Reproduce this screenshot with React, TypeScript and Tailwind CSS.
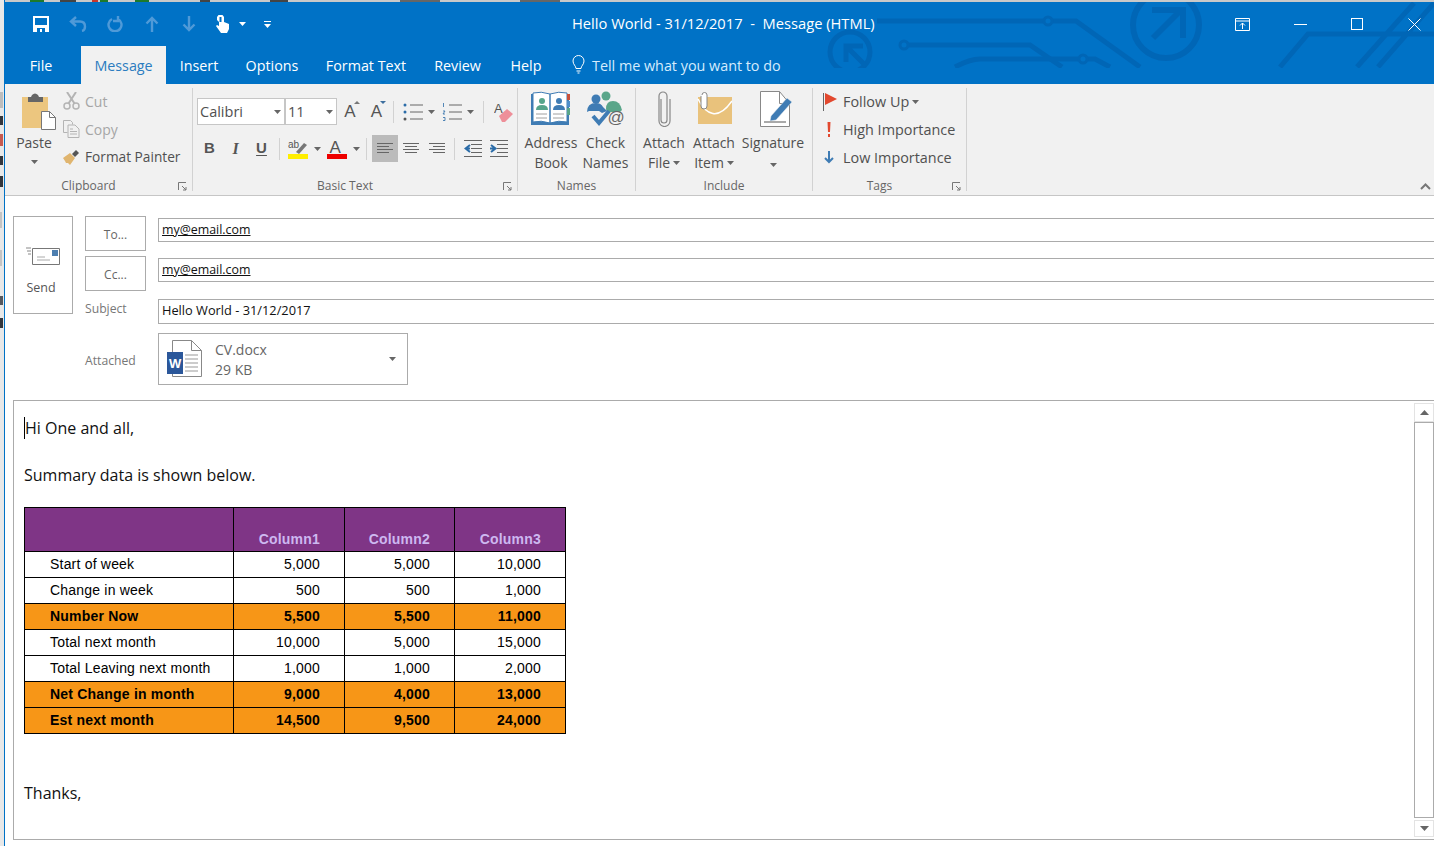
import type { ReactNode } from "react";

const ui = "font-['Open_Sans','Noto_Sans',sans-serif]";

function Caret({ className = "" }: { className?: string }) {
  return (
    <svg width="7" height="4" viewBox="0 0 7 4" className={className}>
      <path d="M0 0h7L3.5 4z" fill="#666" />
    </svg>
  );
}

function Launcher() {
  return (
    <svg width="9" height="9" viewBox="0 0 9 9" fill="none" stroke="#777" className="absolute right-[5px] bottom-[4px]">
      <path d="M.5 8V.5H8M4 4l4 4M5 8h3V5" />
    </svg>
  );
}

function Separator() {
  return <div className="w-px my-[4px] bg-[#d2d2d2]" />;
}

function Group({ width, label, launcher, children }: { width: number; label: string; launcher?: boolean; children: ReactNode }) {
  return (
    <div className="relative flex flex-col shrink-0" style={{ width }}>
      <div className="h-[93px] pt-[3px]">{children}</div>
      <div className={`text-center text-[12px] leading-[18px] text-[#666] ${launcher ? "pr-[20px]" : ""}`}>{label}</div>
      {launcher && <Launcher />}
    </div>
  );
}

function SmallRow({ icon, text, muted, caret, size = "text-[14px]" }: { icon: ReactNode; text: string; muted?: boolean; caret?: boolean; size?: string }) {
  return (
    <div className={`h-[28px] flex items-center ${size} ${muted ? "text-[#a6a6a6]" : "text-[#505050]"}`}>
      {icon}
      <span>{text}</span>
      {caret && <Caret className="ml-[3px]" />}
    </div>
  );
}

function BigButton({ width, icon, lines, caret, iconShift = "" }: { width: number; icon: ReactNode; lines: string[]; caret?: boolean; iconShift?: string }) {
  return (
    <div className="flex flex-col items-center text-[14px] leading-[20px] text-[#505050] shrink-0" style={{ width }}>
      <div className={`h-[46px] pt-[4px] flex justify-center ${iconShift}`}>{icon}</div>
      <div className="whitespace-nowrap">{lines[0]}</div>
      <div className="flex items-center h-[20px] whitespace-nowrap">
        {lines[1]}
        {caret && <Caret className={lines[1] ? "ml-[3px]" : "mt-[3px]"} />}
      </div>
    </div>
  );
}

function CircuitArt() {
  return (
    <svg width="1429" height="66" viewBox="5 2 1429 66" fill="none" stroke="#0066b6" strokeWidth="5" className="absolute left-0 top-0 pointer-events-none">
      <path d="M877 21h199l64 46M905 45h125l32 22" />
      <circle cx="1048" cy="21" r="4" fill="#0072c6" strokeWidth="3" />
      <circle cx="904" cy="45" r="4" fill="#0072c6" strokeWidth="3" />
      <path d="M955 67q15-8 25-8h115l15 8" />
      <circle cx="1083" cy="59" r="4" fill="#0072c6" strokeWidth="3" />
      <circle cx="1166" cy="25" r="33" strokeWidth="6" />
      <path d="M1153 38l27-27M1152 10h31v28" strokeWidth="6" />
      <circle cx="850" cy="52" r="20" strokeWidth="5" />
      <path d="M866 66l-18-18M846 62V46h17" strokeWidth="5" />
      <path d="M1280 67l28-33h126M1357 67l57-64M1378 67l56-64" />
    </svg>
  );
}

function TitleBar() {
  const fade = "#4f9ad8";
  return (
    <div className="relative z-10 h-[44px] flex items-center text-white">
      <div className="w-[567px] h-full flex items-center pl-[28px] shrink-0">
        <svg width="16" height="16" viewBox="0 0 16 16">
          <path d="M0 0h16v16H0z" fill="#fff" />
          <path d="M2 2h12v7H2z" fill="#0072c6" />
          <path d="M4 12h8v4H4z" fill="#0072c6" />
          <path d="M7 13h2v3H7z" fill="#fff" />
        </svg>
        <svg width="18" height="16" viewBox="0 0 18 16" fill="none" stroke={fade} strokeWidth="2.4" className="ml-[20px]">
          <path d="M7 1L2 5.500 7 10M2 5.500h9c4 0 5 3 5 5s-1 4-3 4.500" />
        </svg>
        <svg width="16" height="16" viewBox="0 0 16 16" fill="none" stroke={fade} strokeWidth="2.4" className="ml-[20px]">
          <path d="M5 3a6.500 6.500 0 1 0 6 0M11 0v5H6" />
        </svg>
        <svg width="14" height="16" viewBox="0 0 14 16" fill="none" stroke={fade} strokeWidth="2.4" className="ml-[22px]">
          <path d="M7 16V2M1.500 7.500L7 2l5.500 5.500" />
        </svg>
        <svg width="14" height="16" viewBox="0 0 14 16" fill="none" stroke={fade} strokeWidth="2.4" className="ml-[23px]">
          <path d="M7 0v14M1.500 8.500L7 14l5.500-5.500" />
        </svg>
        <svg width="15" height="18" viewBox="0 0 15 18" className="ml-[19px]">
          <path d="M3.500 0h4l1.500 2v5l5 2v5l-2 4H6l-5-7 1-1 2 1V7L2 5V2z" fill="#fff" />
          <path d="M4.500 2h2v5h-2z" fill="#0072c6" />
        </svg>
        <Caret className="ml-[9px] [&>path]:fill-white" />
        <div className="ml-[18px] flex flex-col items-center gap-[2px]">
          <div className="w-[7px] h-px bg-white" />
          <Caret className="[&>path]:fill-white" />
        </div>
      </div>
      <div className="whitespace-pre pb-[2px] text-[14.700px] flex-1">Hello World - 31/12/2017  -  Message (HTML)</div>
      <div className="flex items-center h-full shrink-0">
        <svg width="15" height="13" viewBox="0 0 15 13" fill="none" stroke="#fff" className="mr-[44px]">
          <path d="M.5.500h14v12H.5zM.5 3h14M7.500 11V5M5 7.500L7.500 5 10 7.500" />
        </svg>
        <div className="w-[13px] h-px bg-white mr-[44px]" />
        <div className="w-[12px] h-[12px] border border-white mr-[45px]" />
        <svg width="13" height="13" viewBox="0 0 13 13" stroke="#fff" className="mr-[13px]">
          <path d="M.5.500l12 12M12.500.500l-12 12" />
        </svg>
      </div>
    </div>
  );
}

function Tab({ width, label, active, extra = "" }: { width: number; label: string; active?: boolean; extra?: string }) {
  return (
    <div
      className={`h-full flex items-center justify-center pt-px text-[14.300px] shrink-0 ${extra} ${active ? "bg-[#f1f1f1] text-[#2b7cc0]" : "text-white"}`}
      style={{ width }}
    >
      {label}
    </div>
  );
}

function TabBar() {
  return (
    <div className="relative z-10 h-[38px] flex items-stretch">
      <Tab width={76} label="File" extra="pr-[4px]" />
      <Tab width={85} label="Message" active />
      <Tab width={66} label="Insert" />
      <Tab width={80} label="Options" />
      <Tab width={108} label="Format Text" />
      <Tab width={75} label="Review" />
      <Tab width={62} label="Help" />
      <div className="flex items-center pl-[15px] pt-px text-[14.350px] text-[#d5ecfd]">
        <svg width="13" height="19" viewBox="0 0 13 19" fill="none" stroke="#fff" className="mr-[7px] -mt-[3px]">
          <path d="M4 13.500C4 11 1 9.500 1 6a5.500 5.500 0 0 1 11 0c0 3.500-3 5-3 7.500zM4.500 16h4M5.500 18h2" />
        </svg>
        Tell me what you want to do
      </div>
    </div>
  );
}

function PasteIcon() {
  return (
    <svg width="35" height="39" viewBox="0 0 35 39">
      <path d="M1 5h26v31H1z" fill="#ecc67f" />
      <path d="M7 5h3l1-2q3-3 6 0l1 2h4v5H7z" fill="#666" />
      <path d="M20.500 19.500h8l6 6v12h-14z" fill="#fff" stroke="#777" />
      <path d="M28.500 19.500v6h6" fill="none" stroke="#777" />
    </svg>
  );
}

function ClipboardGroup() {
  return (
    <div className="flex">
      <div className="w-[58px] flex flex-col items-center text-[14px] leading-[20px] text-[#505050]">
        <div className="h-[46px] pt-[5px] pl-[9px]"><PasteIcon /></div>
        <div>Paste</div>
        <Caret className="mt-[7px]" />
      </div>
      <div className="flex flex-col">
        <SmallRow
          muted
          text="Cut"
          icon={
            <svg width="17" height="18" viewBox="0 0 17 18" fill="none" stroke="#b4b4b4" strokeWidth="1.500" className="mr-[5px]">
              <circle cx="4" cy="14" r="3" />
              <circle cx="13" cy="14" r="3" />
              <path d="M5.500 11.500L13 0M11.500 11.500L4 0" strokeWidth="2" />
            </svg>
          }
        />
        <SmallRow
          muted
          text="Copy"
          icon={
            <svg width="17" height="18" viewBox="0 0 17 18" fill="none" stroke="#b4b4b4" className="mr-[5px]">
              <path d="M.500.500h7l2 2v2M.500.500v12h4M5 5h7l4 4v8.500H5zM7 9h3M7 11.500h7M7 14h7" />
            </svg>
          }
        />
        <SmallRow
          text="Format Painter"
          size="text-[13.700px]"
          icon={
            <svg width="17" height="16" viewBox="0 0 17 16" className="mr-[5px]">
              <path d="M0 9l7-5 5 5-5 7-2-2-2 0-1-2z" fill="#e0b56f" />
              <path d="M9 5l4-4 3 3-4 4z" fill="#555" />
            </svg>
          }
        />
      </div>
    </div>
  );
}

function Glyph({ width, children, active }: { width: number; children: ReactNode; active?: boolean }) {
  return (
    <div className={`h-[27px] flex items-center justify-center shrink-0 ${active ? "bg-[#bbbbbb]" : ""}`} style={{ width }}>
      {children}
    </div>
  );
}

function VRule() {
  return <div className="w-px h-[22px] bg-[#d2d2d2] shrink-0" />;
}

function Lines({ kind }: { kind: "left" | "center" | "right" }) {
  const d = {
    left: "M0 .5h16M0 3.500h12M0 6.500h16M0 9.500h12",
    center: "M0 .5h16M2 3.500h12M0 6.500h16M2 9.500h12",
    right: "M0 .5h16M4 3.500h12M0 6.500h16M4 9.500h12",
  }[kind];
  return (
    <svg width="16" height="11" viewBox="0 0 16 11" fill="none" stroke="#666">
      <path d={d} />
    </svg>
  );
}

function ComboBox({ width, text }: { width: number; text: string }) {
  return (
    <div className="h-[27px] bg-white border border-[#c6c6c6] flex items-center justify-between pl-[2px] pr-[3px] text-[14.500px] text-[#505050] shrink-0" style={{ width }}>
      {text}
      <Caret />
    </div>
  );
}

function ListIcon({ numbered }: { numbered?: boolean }) {
  return (
    <svg width="20" height="18" viewBox="0 0 20 18">
      <path d="M7 2h13M7 9h13M7 16h13" stroke="#666" />
      {numbered ? (
        <path d="M1.500 0v4M1 8h2l-2 3h2M1 14.500h2v3H1" stroke="#2b6ca8" fill="none" strokeWidth=".8" />
      ) : (
        <g fill="#2b6ca8">
          <circle cx="2" cy="2" r="1.500" />
          <circle cx="2" cy="9" r="1.500" />
          <circle cx="2" cy="16" r="1.500" fill="#555" />
        </g>
      )}
    </svg>
  );
}

function BasicTextGroup() {
  return (
    <div className="pl-[4px] pt-[11px] flex flex-col gap-[10px]">
      <div className="flex items-center">
        <ComboBox width={88} text="Calibri" />
        <ComboBox width={52} text="11" />
        <Glyph width={26}>
          <span className="relative text-[17px] text-[#555] font-['Liberation_Sans',sans-serif]">
            A
            <svg width="6" height="3" viewBox="0 0 6 3" className="absolute -right-[4px] top-[2px]"><path d="M3 0l3 3H0z" fill="#777" /></svg>
          </span>
        </Glyph>
        <Glyph width={27}>
          <span className="relative text-[17px] text-[#555] font-['Liberation_Sans',sans-serif]">
            A
            <svg width="6" height="3" viewBox="0 0 6 3" className="absolute -right-[4px] top-[2px]"><path d="M3 3L6 0H0z" fill="#3d6f9e" /></svg>
          </span>
        </Glyph>
        <div className="w-[3px]" />
        <VRule />
        <div className="w-[9px]" />
        <ListIcon />
        <Caret className="ml-[5px]" />
        <div className="w-[7px]" />
        <ListIcon numbered />
        <Caret className="ml-[5px]" />
        <div className="w-[9px]" />
        <VRule />
        <div className="w-[10px]" />
        <svg width="20" height="20" viewBox="0 0 20 20">
          <text x="0" y="11" fontSize="13" fill="#555" fontFamily="Liberation Sans">A</text>
          <path d="M5 14l8-7 6 5-8 8H8z" fill="#ee8f99" />
        </svg>
      </div>
      <div className="flex items-center">
        <Glyph width={25}><span className="font-['Liberation_Sans',sans-serif] font-bold text-[15px] text-[#555]">B</span></Glyph>
        <Glyph width={27}><span className="font-['Liberation_Serif',serif] italic font-bold text-[16px] text-[#555]">I</span></Glyph>
        <Glyph width={25}><span className="font-['Liberation_Sans',sans-serif] font-bold text-[15px] text-[#555] underline underline-offset-2">U</span></Glyph>
        <div className="w-[5px]" />
        <VRule />
        <div className="w-[8px]" />
        <svg width="20" height="20" viewBox="0 0 20 20">
          <text x="0" y="9" fontSize="10" fill="#555" fontFamily="Liberation Sans">ab</text>
          <path d="M8 13l8-9 3 2-8 9z" fill="#777" />
          <path d="M0 15h20v5H0z" fill="#ffee00" />
        </svg>
        <Caret className="ml-[6px]" />
        <div className="w-[6px]" />
        <svg width="20" height="20" viewBox="0 0 20 20">
          <text x="2.500" y="14" fontSize="17" fill="#555" fontFamily="Liberation Sans">A</text>
          <path d="M0 15h20v5H0z" fill="#ee0000" />
        </svg>
        <Caret className="ml-[6px]" />
        <div className="w-[6px]" />
        <VRule />
        <div className="w-[5px]" />
        <Glyph width={26} active><Lines kind="left" /></Glyph>
        <Glyph width={26}><Lines kind="center" /></Glyph>
        <Glyph width={26}><Lines kind="right" /></Glyph>
        <div className="w-[4px]" />
        <VRule />
        <div className="w-[9px]" />
        <svg width="18" height="17" viewBox="0 0 18 17" fill="none">
          <path d="M0 .5h18M7 4.500h11M7 8.500h11M7 12.500h11M0 16.500h18" stroke="#666" />
          <path d="M6 5L1.500 8.500 6 12M2 8.500h4" stroke="#2b6ca8" strokeWidth="2" />
        </svg>
        <div className="w-[8px]" />
        <svg width="18" height="17" viewBox="0 0 18 17" fill="none">
          <path d="M0 .5h18M7 4.500h11M7 8.500h11M7 12.500h11M0 16.500h18" stroke="#666" />
          <path d="M1 5l4.500 3.500L1 12M5 8.500H0" stroke="#2b6ca8" strokeWidth="2" />
        </svg>
      </div>
    </div>
  );
}

function AddressBookIcon() {
  return (
    <svg width="40" height="36" viewBox="0 0 40 36">
      <path d="M0 3h38v31H0z" fill="#3f7cb4" />
      <path d="M2 2q8-2 17 1v29q-9-3-17-1zM36 2q-8-2-17 1v29q9-3 17-1z" fill="#fff" stroke="#3f7cb4" />
      <path d="M36 3h3v6h-3z" fill="#c9503a" />
      <path d="M36 10h3v6h-3z" fill="#4d8ec9" />
      <path d="M36 17h3v7h-3z" fill="#5aa68a" />
      <circle cx="11" cy="10" r="3" fill="#57a58b" />
      <path d="M5 19q0-5 6-5t6 5z" fill="#57a58b" />
      <circle cx="28" cy="10" r="3" fill="#3f7cb4" />
      <path d="M22 19q0-5 6-5t6 5z" fill="#3f7cb4" />
      <path d="M5 23h11M5 27h11M22 23h11M22 27h11" stroke="#888" strokeWidth=".8" />
    </svg>
  );
}

function CheckNamesIcon() {
  return (
    <svg width="38" height="37" viewBox="0 0 38 37">
      <circle cx="19" cy="5" r="4.500" fill="#5aa68a" />
      <path d="M19 18q0-8 7-8t9 9l-2 2H20z" fill="#5aa68a" />
      <circle cx="9" cy="8" r="4.500" fill="#3f7cb4" />
      <path d="M0 21q0-9 9-9 5 0 7 4l4 4-5 2-3-2H2z" fill="#3f7cb4" />
      <path d="M6 25l6 7L22 20" fill="none" stroke="#3f7cb4" strokeWidth="4" />
      <text x="20.500" y="32" fontSize="17" fill="#666" fontFamily="Liberation Sans">@</text>
    </svg>
  );
}

function NamesGroup() {
  return (
    <div className="flex pl-[6px]">
      <BigButton width={54} icon={<AddressBookIcon />} lines={["Address", "Book"]} />
      <BigButton width={55} icon={<CheckNamesIcon />} lines={["Check", "Names"]} />
    </div>
  );
}

function IncludeGroup() {
  return (
    <div className="flex pl-[4px]">
      <BigButton
        width={48}
        lines={["Attach", "File"]}
        caret
        icon={
          <svg width="14" height="36" viewBox="0 0 14 36" fill="none" stroke="#888" strokeWidth="1.200">
            <path d="M4 8v21a3 3 0 0 0 6 0V5a4 4 0 0 0-8 0v25a5.500 5.500 0 0 0 11 0V8" />
          </svg>
        }
      />
      <BigButton
        width={52}
        lines={["Attach", "Item"]}
        caret
        icon={
          <svg width="36" height="34" viewBox="0 0 36 34">
            <path d="M2 6h34v27H2z" fill="#e9c27c" />
            <path d="M2 8c8 16 20 22 34 2" fill="none" stroke="#fff" strokeWidth="1.500" />
            <path d="M5 4v10a3 3 0 0 0 6 0V3a2.500 2.500 0 0 0-5 0" transform="translate(0 1)" fill="#fff" stroke="#888" />
          </svg>
        }
      />
      <BigButton
        width={66}
        lines={["Signature", ""]}
        caret
        iconShift="ml-[6px]"
        icon={
          <svg width="34" height="36" viewBox="0 0 34 36" fill="none">
            <path d="M1.500.5h19l10 12v23h-29z" fill="#fff" stroke="#888" />
            <path d="M20.500.5v12h10" stroke="#888" />
            <path d="M11 30l1-5 16-18 5 4-16 18z" fill="#3f7cb4" stroke="#f1f1f1" strokeWidth=".5" />
            <path d="M5 31h22" stroke="#555" />
          </svg>
        }
      />
    </div>
  );
}

function TagsGroup() {
  return (
    <div className="flex flex-col pl-[10px] pt-px">
      <SmallRow
        caret
        text="Follow Up"
        size="text-[14.400px]"
        icon={
          <svg width="20" height="18" viewBox="0 0 20 18">
            <path d="M.5 0v18" stroke="#666" />
            <path d="M2 0l12 6-12 6z" fill="#e2492f" />
          </svg>
        }
      />
      <SmallRow
        text="High Importance"
        size="text-[14.400px]"
        icon={
          <svg width="20" height="16" viewBox="0 0 20 16">
            <path d="M4.500 0h3l-.5 10H5zM5 12h2v3H5z" fill="#e2492f" />
          </svg>
        }
      />
      <SmallRow
        text="Low Importance"
        size="text-[14.400px]"
        icon={
          <svg width="20" height="14" viewBox="0 0 20 14" fill="none" stroke="#3f7cb4" strokeWidth="2">
            <path d="M6 0v11M2 7l4 4 4-4" />
          </svg>
        }
      />
    </div>
  );
}

function Ribbon() {
  return (
    <div className="relative h-[112px] bg-[#f1f1f1] border-b border-[#c6c6c6] flex text-[#505050] shrink-0">
      <Group width={187} label="Clipboard" launcher><ClipboardGroup /></Group>
      <Separator />
      <Group width={324} label="Basic Text" launcher><BasicTextGroup /></Group>
      <Separator />
      <Group width={117} label="Names"><NamesGroup /></Group>
      <Separator />
      <Group width={176} label="Include"><IncludeGroup /></Group>
      <Separator />
      <Group width={153} label="Tags" launcher><TagsGroup /></Group>
      <Separator />
      <svg width="11" height="7" viewBox="0 0 11 7" fill="none" stroke="#777" strokeWidth="2" className="absolute right-[3px] bottom-[5px]">
        <path d="M1 6l4.500-4.500L10 6" />
      </svg>
    </div>
  );
}

function AddressField({ label, value }: { label: string; value: string }) {
  return (
    <div className="flex items-start h-[40px]">
      <button className="w-[61px] h-[35px] pt-[2px] border border-[#ababab] bg-white text-[12px] text-[#666] shrink-0">{label}</button>
      <div className="ml-[12px] mt-[2px] flex-1 h-[24px] border border-[#ababab] border-r-0 flex items-center pl-[3px] text-[12.400px] text-[#111]">
        <span className="underline">{value}</span>
      </div>
    </div>
  );
}

function WordIcon() {
  return (
    <svg width="35" height="38" viewBox="0 0 35 38">
      <path d="M5.500.500h19l10 10v26h-29z" fill="#fff" stroke="#888" />
      <path d="M24.500.500v10h10" fill="none" stroke="#888" />
      <path d="M18 15h13M18 19h13M18 23h13M18 27h13M18 31h13" stroke="#999" />
      <path d="M0 12h16v22H0z" fill="#2b579a" />
      <text x="2" y="28" fontSize="13" fontWeight="700" fill="#fff" fontFamily="Liberation Sans">W</text>
    </svg>
  );
}

function MessageHeader() {
  return (
    <div className="h-[204px] flex pl-[8px] pt-[20px] shrink-0">
      <div className="w-[60px] h-[98px] border border-[#ababab] flex flex-col items-center shrink-0">
        <svg width="34" height="20" viewBox="0 0 34 20" className="mt-[28px]" fill="none">
          <path d="M6.500 3.500h27v16h-27z" fill="#fff" stroke="#777" />
          <path d="M26 5h6v6h-6z" fill="#4d7fb0" />
          <path d="M11 12h8M11 15h13" stroke="#aaa" />
          <path d="M0 3h5M1 6h4M2 9h3" stroke="#888" />
        </svg>
        <span className="mt-[14px] mr-[4px] text-[12.500px] text-[#555]">Send</span>
      </div>
      <div className="ml-[12px] flex-1 flex flex-col">
        <AddressField label="To..." value="my@email.com" />
        <AddressField label="Cc..." value="my@email.com" />
        <div className="flex items-center h-[26px] mt-[2px]">
          <span className="w-[73px] pb-[4px] text-[12.200px] text-[#777] shrink-0">Subject</span>
          <div className="flex-1 h-[25px] border border-[#ababab] border-r-0 flex items-center pl-[3px] text-[12.800px] text-[#111]">
            Hello World - 31/12/2017
          </div>
        </div>
        <div className="flex items-center h-[52px] mt-[9px]">
          <span className="w-[73px] pt-[4px] text-[12.200px] text-[#777] shrink-0">Attached</span>
          <div className="w-[250px] h-[52px] border border-[#ababab] flex items-center pl-[8px] pr-[11px]">
            <WordIcon />
            <div className="ml-[13px] pt-[2px] flex-1 text-[14px] leading-[20px] text-[#666]">
              <div>CV.docx</div>
              <div>29 KB</div>
            </div>
            <Caret />
          </div>
        </div>
      </div>
    </div>
  );
}

type Row = { label: string; values: string[]; strong?: boolean };

const rows: Row[] = [
  { label: "Start of week", values: ["5,000", "5,000", "10,000"] },
  { label: "Change in week", values: ["500", "500", "1,000"] },
  { label: "Number Now", values: ["5,500", "5,500", "11,000"], strong: true },
  { label: "Total next month", values: ["10,000", "5,000", "15,000"] },
  { label: "Total Leaving next month", values: ["1,000", "1,000", "2,000"] },
  { label: "Net Change in month", values: ["9,000", "4,000", "13,000"], strong: true },
  { label: "Est next month", values: ["14,500", "9,500", "24,000"], strong: true },
];

function SummaryTable() {
  return (
    <table className="w-[541px] table-fixed border-collapse font-['Liberation_Sans',sans-serif] text-[14px] tracking-[0.2px] text-black">
      <colgroup>
        <col className="w-[209px]" />
        <col className="w-[111px]" />
        <col className="w-[110px]" />
        <col className="w-[111px]" />
      </colgroup>
      <thead>
        <tr className="h-[44px] bg-[#7f3586] text-[#cdb8f0]">
          <th className="border border-black" />
          {["Column1", "Column2", "Column3"].map((c) => (
            <th key={c} className="border border-black pr-[24px] pb-px text-right align-bottom font-bold">{c}</th>
          ))}
        </tr>
      </thead>
      <tbody>
        {rows.map((r) => (
          <tr key={r.label} className={`h-[26px] ${r.strong ? "bg-[#f79617] font-bold" : "bg-white"}`}>
            <td className="border border-black pl-[25px] p-0">{r.label}</td>
            {r.values.map((v, i) => (
              <td key={i} className="border border-black pr-[24px] p-0 text-right">{v}</td>
            ))}
          </tr>
        ))}
      </tbody>
    </table>
  );
}

function ScrollBar() {
  return (
    <div className="w-[20px] flex flex-col items-stretch pt-[2px] shrink-0">
      <div className="h-[19px] flex items-center justify-center border border-[#e3e3e3]">
        <svg width="9" height="5" viewBox="0 0 9 5"><path d="M4.500 0L9 5H0z" fill="#666" /></svg>
      </div>
      <div className="h-[396px] border border-[#ababab]" />
      <div className="h-[17px] mt-[2px] flex items-center justify-center border border-[#e3e3e3]">
        <svg width="9" height="5" viewBox="0 0 9 5"><path d="M4.500 5L9 0H0z" fill="#666" /></svg>
      </div>
    </div>
  );
}

function MessageBody() {
  return (
    <div className="ml-[8px] h-[440px] border border-r-0 border-[#ababab] flex shrink-0 bg-white">
      <div className="flex-1 pl-[10px] pt-[16px] text-[16px] text-[#111]">
        <div className="h-[22px] leading-[22px] border-l border-black w-fit">Hi One and all,</div>
        <div className="mt-[25px] h-[22px] leading-[22px]">Summary data is shown below.</div>
        <div className="mt-[21px]"><SummaryTable /></div>
        <div className="mt-[48px] h-[22px] leading-[22px]">Thanks,</div>
      </div>
      <ScrollBar />
    </div>
  );
}

// the window is a screenshot crop, so a sliver of the desktop shows round it
function DesktopSliver() {
  return (
    <svg width="4" height="846" viewBox="0 0 4 846" className="shrink-0 bg-[#e8e8e8]">
      <path d="M0 92h3v16H0z" fill="#bdbdbd" />
      <path d="M0 116h3v9H0zM0 156h3v9H0zM0 176h3v11H0zM0 318h3v10H0z" fill="#33363c" />
      <path d="M0 134h3v12H0z" fill="#c65a50" />
      <path d="M0 212h2v16H0zM0 250h2v16H0z" fill="#c4c4c4" />
      <path d="M0 296h3v9H0z" fill="#55585e" />
    </svg>
  );
}

function TopSliver() {
  return (
    <svg width="1429" height="2" viewBox="5 0 1429 2" className="shrink-0 block bg-[#c9c9c9]">
      <path d="M30 0h14v2H30zM100 0h8v2h-8zM135 0h14v2h-14z" fill="#1d7a2c" />
      <path d="M60 0h16v2H60zM200 0h10v2h-10zM270 0h18v2h-18z" fill="#444" />
      <path d="M92 0h6v2h-6z" fill="#c8362c" />
      <path d="M400 0h40v2h-40zM520 0h40v2h-40z" fill="#666" />
    </svg>
  );
}

function App() {
  return (
    <div className={`w-[1434px] h-[846px] overflow-hidden bg-white flex ${ui}`}>
      <DesktopSliver />
      <div className="flex-1 flex flex-col border-l border-[#0072c6] min-w-0">
        <TopSliver />
        <div className="relative bg-[#0072c6] shrink-0">
          <CircuitArt />
          <TitleBar />
          <TabBar />
        </div>
        <Ribbon />
        <MessageHeader />
        <MessageBody />
      </div>
    </div>
  );
}

export default App;
